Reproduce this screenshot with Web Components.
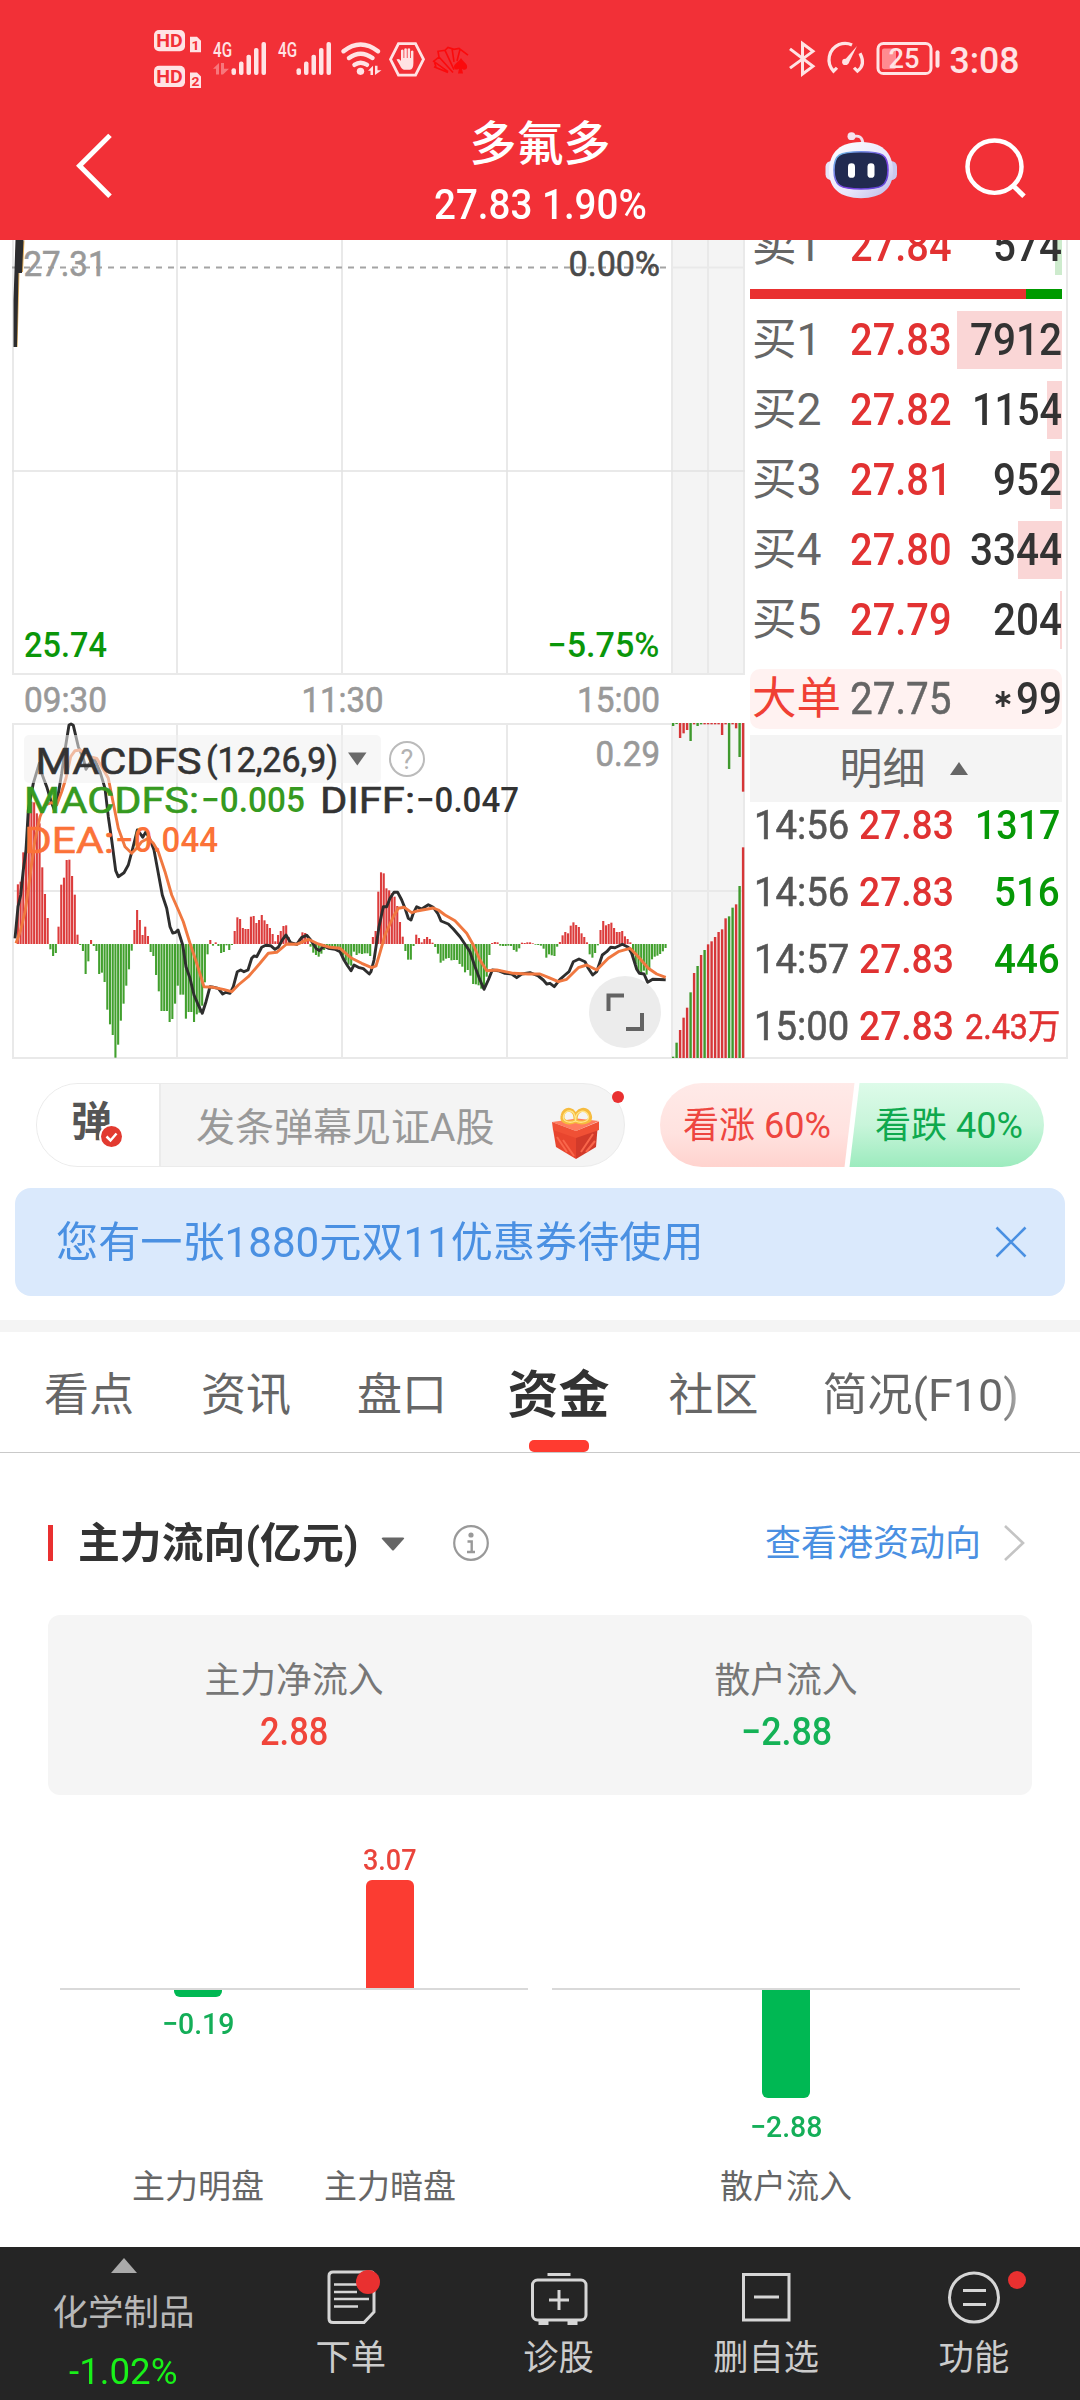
<!DOCTYPE html>
<html lang="zh-CN">
<head>
<meta charset="utf-8">
<title>多氟多 27.83 1.90%</title>
<style>
html, body { margin: 0; padding: 0; background: #fff; }
body { width: 1080px; height: 2400px; overflow: hidden; font-family: Roboto, "Noto Sans CJK SC", sans-serif; color: #333; }
</style>
</head>
<body>
<stock-app></stock-app>
<script>
const define = (tag, html, setup) => {
  const tpl = document.createElement('template');
  tpl.innerHTML = '<style>*{box-sizing:border-box}svg{display:block;overflow:visible}</style>' + html;
  customElements.define(tag, class extends HTMLElement {
    connectedCallback() {
      if (this.shadowRoot) return;
      const root = this.attachShadow({ mode: 'open' });
      root.appendChild(tpl.content.cloneNode(true));
      if (setup) setup(this, root);
    }
  });
};

/* Text squeezed or widened horizontally to a given advance width. */
define('fit-text', `
<style>
:host { display: block; white-space: nowrap; flex: none; }
span { display: inline-block; transform-origin: 0 50%; white-space: pre; }
</style><span><slot></slot></span>`, (el, root) => {
  const w = +el.getAttribute('w'), span = root.querySelector('span');
  el.style.width = w + 'px';
  span.style.transform = `scaleX(${w / span.offsetWidth})`;
});

define('status-bar', `
<style>
:host { display: flex; height: 104px; padding: 0 61px 0 154px; justify-content: space-between; }
</style>
<svg width="320" height="104.500" viewBox="154 0 320 108" preserveAspectRatio="none" fill="#ffe3e4" font-family="Roboto">
  <rect x="154" y="31" width="31" height="22" rx="5"/><rect x="154" y="68" width="31" height="22" rx="5"/>
  <path d="M190 38h7l4 4v12h-11zM190 75h7l4 4v12h-11z"/>
  <g fill="#f23037" font-weight="700" text-anchor="middle">
    <text x="169.500" y="49" font-size="19.500">HD</text><text x="169.500" y="86" font-size="19.500">HD</text>
    <text x="195.500" y="52" font-size="14">1</text><text x="195.500" y="88.500" font-size="14">2</text>
  </g>
  <g font-weight="500" font-size="21"><text x="213" y="58.500" textLength="19" lengthAdjust="spacingAndGlyphs">4G</text><text x="278" y="58.500" textLength="19" lengthAdjust="spacingAndGlyphs">4G</text></g>
  <g opacity=".4"><path d="M213 71l6-6v12h-3v-6zM221 65h3v6h5l-6 6h-2z"/></g>
  <g id="bars"><rect x="231.500" y="70.500" width="4.500" height="7" rx="2"/><rect x="239" y="63.500" width="4.500" height="14" rx="2"/><rect x="246.500" y="56.500" width="4.500" height="21" rx="2"/><rect x="254" y="49.500" width="4.500" height="28" rx="2"/><rect x="261.500" y="43.500" width="4.500" height="34" rx="2"/></g>
  <use href="#bars" x="65"/>
  <g fill="none" stroke="#ffe3e4" stroke-width="4.500" stroke-linecap="round"><path d="M343.500 53q17-14 34.500 0M349 60q11.500-9 23.500 0M354.500 67q6-4.500 12.500 0"/></g>
  <circle cx="360.500" cy="73.700" r="3.700"/><path d="M368 73l5-5v9.500h-2.500v-4.500zM375 68h2.500v4.500h4l-6.500 5z"/>
  <path d="M390.500 61.300L398.500 45h17l8 16.300-8 16.300h-17z" fill="none" stroke="#ffe3e4" stroke-width="2.800"/>
  <path d="M396.500 61.500q2.500-1.500 4.500 1.500V52q1.500-1.500 2.500 0v8h.8v-9.500q1.500-1.500 2.500 0V60h.8v-9.500q1.500-1.500 2.500 0V60h.8v-7q1.500-1.500 2.500 0v12q0 6.500-3.500 7h-6q-2 0-4-4.500z"/>
  <g fill="none" stroke="#fb0a0c" stroke-width="1.600"><path d="M436 69l-2-6 5-4-1-6 7-1 3-3 6 2 5-1 4 3 5 4M439 59l14 16M445 52l9 20M452 50l2 14M460 51l-3 12M434 69l14 6M433 63l15 11"/></g>
  <path d="M461 60c3 5 7 6 6 10-1 3-4 2-5 1l1 5h-5l1-5c-1 1-5 2-5-2 0-3 4-4 7-9z" fill="#fb0a0c"/>
</svg>
<svg width="232" height="104.500" viewBox="787 0 232 108" preserveAspectRatio="none" fill="none" stroke="#ffe3e4" font-family="Roboto">
  <path d="M790 50.500L813 68.500 802.500 76.500V45L813 53 790 70.500" stroke-width="3"/>
  <path d="M852 46.500Q846 43.500 839 46C828 51 826 65 833.500 73.500L837 70M860 55Q866 67 857.500 73.500L854 70" stroke-width="3.200"/>
  <path d="M857 47.500l-8.500 18q-4 3-6-1z" fill="#ffe3e4" stroke="none"/><circle cx="845.300" cy="64" r="3.200" fill="#ffe3e4" stroke="none"/>
  <rect x="878" y="45" width="53" height="31" rx="5.500" stroke-width="3"/>
  <rect x="882" y="50" width="14" height="21.500" rx="2" fill="#ff8b90" stroke="none"/>
  <rect x="935.500" y="52" width="4" height="18" rx="2" fill="#ffe3e4" stroke="none"/>
  <g fill="#ffe3e4" stroke="none"><text x="888.500" y="70.500" font-size="28" font-weight="500" textLength="31" lengthAdjust="spacingAndGlyphs">25</text>
  <text x="949.500" y="75.500" font-size="37.500" font-weight="500" textLength="70" lengthAdjust="spacingAndGlyphs">3:08</text></g>
</svg>`);

define('stock-header', `
<style>
:host { display: block; height: 240px; background: #f23037; color: #fff; overflow: hidden; }
.row { display: flex; height: 136px; justify-content: space-between; }
.side { width: 280px; display: flex; }
.mid { display: flex; flex-direction: column; align-items: center; font-weight: 500; }
.name { font-size: 47px; line-height: 66px; height: 70px; padding-top: 7px; }
.price { font-size: 42px; line-height: 62px; }
.left { padding: 25.700px 0 0 70px; }
.right { justify-content: flex-end; gap: 59px; padding: 22px 50px 0 0; }
</style>
<status-bar></status-bar>
<div class="row">
  <div class="side left"><svg width="50" height="71.600" viewBox="70 134 50 74" preserveAspectRatio="none"><path d="M110 139.500L79.500 171l30.500 31.500" fill="none" stroke="#fff" stroke-width="5"/></svg></div>
  <div class="mid"><div class="name">多氟多</div><fit-text class="price" w="213">27.83 1.90%</fit-text></div>
  <div class="side right">
    <svg width="76" height="77.500" viewBox="823 130 76 80" preserveAspectRatio="none">
      <defs><linearGradient id="sh" x1="0" y1="0" x2="1" y2="1"><stop offset="0" stop-color="#fff"/><stop offset=".6" stop-color="#e8e6fb"/><stop offset="1" stop-color="#b9b7e6"/></linearGradient>
      <linearGradient id="rim" x1="0" y1="0" x2="1" y2="1"><stop offset="0" stop-color="#6ec5e8"/><stop offset=".6" stop-color="#7a3fe0"/><stop offset="1" stop-color="#5b4ad8"/></linearGradient></defs>
      <path d="M852 141.500q10-4 11 7" fill="none" stroke="#f3ddea" stroke-width="3"/><circle cx="851.500" cy="140.500" r="4" fill="#f6e3ef"/>
      <rect x="825.500" y="166" width="12" height="20" rx="6" fill="#e6e3f8"/><rect x="885" y="166" width="12" height="20" rx="6" fill="#c9c8ee"/>
      <path d="M861 146.500c25 0 32 15 32 30 0 18-11 28-32 28s-32-10-32-28c0-15 7-30 32-30z" fill="url(#sh)"/>
      <path d="M861 156.500c22 0 27 3 27 19 0 17-7 19.500-27 19.500s-27-2.500-27-19.500c0-16 5-19 27-19z" fill="#212a50" stroke="url(#rim)" stroke-width="1.600"/>
      <rect x="848" y="168.500" width="7" height="15" rx="3.500" fill="#fff"/><rect x="867.500" y="168.500" width="7" height="15" rx="3.500" fill="#fff"/>
    </svg>
    <svg width="72" height="73.600" viewBox="958 130 72 76" preserveAspectRatio="none" fill="none" stroke="#fff" stroke-width="4.500"><circle cx="994.500" cy="172" r="27"/><path d="M1014 192.500l10 10" stroke-width="5"/></svg>
  </div>
</div>`);

/* Minute chart with the MACD study below and the auction column at the right. */
define('time-chart', `
<style>:host { display: block; width: 745px; height: 823px; overflow: hidden; }</style>
<svg width="745" height="823" viewBox="0 240 745 823" font-family="Roboto">
  <rect x="672" y="240" width="72" height="434" fill="#f4f4f4"/><rect x="672" y="724" width="72" height="334" fill="#f4f4f4"/>
  <g stroke="#e9e9e9" stroke-width="2" fill="none">
    <path d="M13 240V674M177 240V674M342 240V674M507 240V674M672 240V674M708 240V674M744 240V674M12 674H745M672 267.500H744"/>
    <path d="M12 471H745" stroke="#e2e2e2" stroke-width="1.500"/>
    <path d="M13 724V1058M177 724V1058M342 724V1058M507 724V1058M672 724V1058M708 724V1058M744 724V1058M12 724H745M12 891H745M12 1058H745"/>
  </g>
  <path d="M12 267.500H668" stroke="#a4a4a4" stroke-width="1.800" stroke-dasharray="6 6"/>
  <path d="M24.500 240L23 272h-3.500L17.500 347h-2V250z" fill="#e0ac58"/>
  <path d="M15.500 240h8L22 273h-3.500L17 347h-3.500V300z" fill="#2c2c2e"/>
  <g id="hist"></g><g id="auction"></g>
  <g fill="none" stroke-width="2.900" stroke-linejoin="round"><path id="diff" stroke="#2e2e2e"/><path id="dea" stroke="#f07840"/></g>
  <rect x="24" y="735" width="357" height="48" rx="5" fill="#f0f0f0" fill-opacity=".55"/>
  <path d="M348 752.500h18.500l-9.200 13z" fill="#6a6a6a"/>
  <circle cx="407" cy="759" r="17" fill="none" stroke="#bbb" stroke-width="2"/>
  <text x="407" y="768.500" font-size="27" fill="#b2b2b2" text-anchor="middle">?</text>
  <g id="labels"></g>
  <circle cx="625" cy="1012" r="36" fill="#ececec"/>
  <path d="M608.500 1011v-15.500H624M642 1013v16h-16" fill="none" stroke="#636363" stroke-width="4"/>
</svg>`, (el, root) => {
  const hist = [0,179,187,275,292,410,427,425,392,362,230,150,78,-16,-36,-27,52,178,199,252,253,204,148,28,-3,-21,-90,-52,12,-6,-21,-90,-86,-114,-197,-241,-273,-341,-302,-230,-179,-125,-76,-20,42,102,72,27,52,24,-24,-36,-93,-142,-201,-201,-201,-234,-225,-179,-125,-152,-152,-224,-204,-204,-234,-211,-206,-185,-115,-31,12,-5,5,-6,-27,-24,-4,-18,-3,39,80,75,48,45,45,82,84,63,72,87,71,60,48,30,8,27,39,54,56,20,6,4,-4,16,35,33,17,-8,-26,-33,-38,-29,-18,-12,-12,-14,-12,-15,-25,-35,-50,-62,-65,-23,-33,-28,-30,-28,-28,-36,21,39,157,215,212,167,161,152,142,114,66,22,-21,-47,-47,-6,28,18,5,15,21,15,4,-9,-29,-56,-50,-44,-42,-49,-48,-48,-60,-68,-85,-78,-95,-120,-121,-124,-134,-137,-98,-33,3,6,5,-5,-6,-6,-5,-6,-18,-23,-13,4,3,5,5,2,-2,-3,-5,-14,-41,-31,-34,-36,-8,6,26,36,32,55,65,57,51,32,21,5,-31,-41,-27,-4,42,69,56,60,64,48,36,36,39,23,15,5,-40,-60,-85,-85,-80,-92,-74,-46,-38,-35,-30,-22,-12];
  const rect = (x, y, w, h, f) => `<rect x="${x.toFixed(2)}" y="${y.toFixed(2)}" width="${w}" height="${h.toFixed(2)}" fill="${f}"/>`;
  root.getElementById('hist').innerHTML = hist.map((v, i) => {
    const x = (45.5 + 8.13 * i) / 3 - 1.05, h = Math.abs(v) / 3;
    return rect(x, v > 0 ? 944 - h : 944, 2.1, h, v > 0 ? '#dc3c3c' : '#42a02e');
  }).join('');
  const cols = 'ggrrrgrgrgrrrrrrggrgr';
  const low = [1070,1028,990,953,923,877,819,798,765,750,733,724,711,696,688,655,649,623,613,558,442];
  const topCols = 'ggrrrgrggrrrrrrrgrrgr';
  const high = [78,72,114,100,90,123,73,78,73,73,73,73,73,73,105,73,207,73,85,171,275];
  const c = { r: '#d63638', g: '#3f992d' };
  topCols.length && (root.getElementById('auction').innerHTML = low.map((y, i) => {
    const x = 370 + (909 + 10.5 * i) / 3 - 1.1;
    return rect(x, 700 + y / 3, 2.4, (1074 - y) / 3, c[cols[i]]) + rect(x, 723, 2.4, (high[i] - 69) / 3, c[topCols[i]]);
  }).join(''));
  const path = (a, b) => 'M' + a.concat(b.map((v, i) => i % 2 ? v : v + 1110)).map((v, i) => (i % 2 ? 700 + v / 3 : v / 3).toFixed(1)).join(' ');
  root.getElementById('diff').setAttribute('d', path(
    [45,715,54,620,62,585,70,510,78,450,85,330,100,250,118,190,127,225,140,260,152,300,163,330,172,300,185,220,195,150,207,75,213,72,220,76,235,140,250,175,258,208,275,180,285,180,300,215,315,265,325,350,335,420,347,512,355,530,372,518,385,495,397,450,412,390,420,400,428,412,437,397,447,410,462,450,475,520,487,585,500,625,510,680,518,699,527,697,534,690,548,735,558,800,570,835,582,885,595,915,607,940,618,905,630,860,640,862,655,865,668,882,678,877,690,880,700,860,712,815,722,810,732,815,744,810,755,775,762,768,770,770,785,742,797,736,812,737,825,748,835,742,848,718,858,705,872,728,890,733,905,712,920,706,932,720,948,745,958,752,972,738,985,745,1005,748,1020,755,1032,780,1043,798,1053,812,1062,795,1075,802,1090,806,1108,822],
    [3,815,12,780,18,740,27,680,40,620,50,620,60,595,72,577,83,577,95,600,105,625,115,655,123,660,130,640,140,620,155,627,175,614,190,622,203,640,213,663,235,672,250,687,270,710,290,740,300,755,315,800,330,840,342,868,355,840,367,810,385,812,405,820,425,822,440,833,455,822,480,818,505,828,520,840,530,852,540,850,553,860,570,838,585,825,597,815,610,785,627,777,645,785,655,805,668,825,680,815,697,765,710,755,722,742,735,743,757,733,775,742,785,760,800,808,808,820,822,822,833,847,848,838,887,839]));
  root.getElementById('dea').setAttribute('d', path(
    [48,730,62,690,75,635,85,570,95,490,105,420,120,350,135,315,155,308,170,315,185,275,198,235,212,170,225,152,240,150,270,170,290,175,305,200,325,235,340,310,355,385,375,440,395,460,410,445,425,425,445,415,460,430,475,455,495,515,515,585,535,630,550,665,570,730,590,790,612,860,640,862,670,868,695,875,715,855,745,830,780,790,805,760,830,757,860,732,890,733,925,718,955,732,990,742,1020,745,1055,775,1085,790],
    [5,803,18,798,28,765,45,705,70,650,85,625,103,622,125,638,145,632,190,624,205,630,225,645,255,662,290,700,310,735,330,780,350,812,380,810,430,820,475,822,510,822,535,832,565,845,590,838,625,803,650,795,680,810,715,775,745,755,780,745,800,765,835,805,860,822,887,832]));
  const g = '#0a960a', gr = '#999', k = '#333', m = '#369a20', o = '#fb7238';
  const texts = [
    ['27.31', 23.5, 263.800, 83, gr, 400], ['0.00%', 568.5, 263.800, 91.5, '#4a4a4a', 400],
    ['25.74', 24, 644.800, 83, g, 500], ['−5.75%', 547.500, 644.800, 112, g, 500],
    ['09:30', 24, 699.600, 83, gr, 400], ['11:30', 301.500, 699.600, 82, gr, 400], ['15:00', 577, 699.600, 83, gr, 400],
    ['0.29', 595.500, 753.600, 64.5, gr, 400],
    ['MACDFS', 35.500, 761, 166, k, 400], ['(12,26,9)', 206, 760, 132, k, 400],
    ['MACDFS:', 24, 800, 175, m, 400], ['−0.005', 201, 799.800, 104, m, 500],
    ['DIFF:', 320, 800, 95, k, 400], ['−0.047', 416, 799.800, 103, k, 500],
    ['DEA:', 24, 840, 90, o, 400], ['−0.044', 115, 839.800, 103, o, 500]];
  root.getElementById('labels').innerHTML = texts.map(([t, x, y, w, f, b]) => {
    const s = /[A-Z]/.test(t) ? 36.5 : 35;
    return `<text x="${x}" y="${y + s * .357}" font-size="${s}" font-weight="${b}" fill="${f}" ${b === 400 ? `stroke="${f}" stroke-width=".6"` : ''} textLength="${w}" lengthAdjust="spacingAndGlyphs">${t}</text>`;
  }).join('');
});

define('book-row', `
<style>
:host { display: flex; height: 58px; margin-bottom: 12px; font-size: 44.500px; line-height: 58px; flex: none; align-items: center; padding: 0 0 0 2px; position: relative;
  background: linear-gradient(var(--depth, #fad6d6), var(--depth, #fad6d6)) right / var(--w, 0) 100% no-repeat; }
.n { width: 98px; color: #666; flex: none; }
.p { color: #e23232; font-weight: 500; flex: 1; }
.q { color: #333; font-weight: 500; }
</style><div class="n"></div><div class="p"><fit-text w="102"><slot name="p"></slot></fit-text></div><slot name="q" class="q"></slot>`, (el, root) => {
  root.querySelector('.n').textContent = el.getAttribute('label');
  el.style.setProperty('--w', el.getAttribute('bar') + 'px');
});

define('trade-row', `
<style>
:host { display: flex; height: 67px; line-height: 46px; font-size: 41.500px; font-weight: 500; padding: 0 2px 0 4px; flex: none; }
.t { width: 105px; color: #555; font-weight: 400; -webkit-text-stroke: .6px #555; }
.p { flex: 1; color: #e03232; }
.q { color: var(--c, #069806); }
</style><div class="t"><fit-text w="95"><slot name="t"></slot></fit-text></div><div class="p"><fit-text w="95">27.83</fit-text></div><div class="q"><slot></slot></div>`);

define('order-book', `
<style>
:host { display: flex; flex-direction: column; width: 323px; height: 819px; border: 0 solid #e9e9e9; border-width: 0 2px 2px 0; padding: 0 4px 0 5px; overflow: hidden; }
.first { margin-top: -23px; margin-bottom: 14px; --depth: #cdebcd; }
.split { display: flex; height: 10px; margin-bottom: 12px; flex: none; background: #009a00; }
.split i { width: 276px; background: #e93030; }
.big { display: flex; height: 60px; margin: 8px 0 6px; background: #fff2f1; border-radius: 10px; line-height: 59px; font-size: 44px; align-items: center; flex: none; padding: 0 0 0 2px; }
.big b { font-weight: 400; font-size: 44.500px; color: #f04034; width: 98px; }
.big span { flex: 1; color: #666; -webkit-text-stroke: .5px #666; }
.big em { display: flex; align-items: center; gap: 5px; font-style: normal; color: #333; font-weight: 500; }
.more { display: flex; height: 67px; background: #f4f4f4; font-size: 43px; line-height: 76px; color: #666; justify-content: center; align-items: center; gap: 24px; padding-right: 5px; flex: none; }
.last { --c: #e03232; }
</style>
<book-row class="first" label="卖1" bar="7"><span slot="p">27.84</span><fit-text slot="q" w="69">574</fit-text></book-row>
<div class="split"><i></i></div>
<book-row label="买1" bar="105"><span slot="p">27.83</span><fit-text slot="q" w="92">7912</fit-text></book-row>
<book-row label="买2" bar="15"><span slot="p">27.82</span><fit-text slot="q" w="90">1154</fit-text></book-row>
<book-row label="买3" bar="12"><span slot="p">27.81</span><fit-text slot="q" w="69">952</fit-text></book-row>
<book-row label="买4" bar="44"><span slot="p">27.80</span><fit-text slot="q" w="92">3344</fit-text></book-row>
<book-row label="买5" bar="2"><span slot="p">27.79</span><fit-text slot="q" w="69">204</fit-text></book-row>
<div class="big"><b>大单</b><span><fit-text w="102">27.75</fit-text></span><em><svg width="16" height="16" viewBox="0 0 16 16" stroke="#333" stroke-width="3"><path d="M8 0v16M1 4l14 8M15 4L1 12"/></svg><fit-text w="46">99</fit-text></em></div>
<div class="more">明细<svg width="18" height="13"><path d="M0 13L9 0l9 13z" fill="#666"/></svg></div>
<trade-row><span slot="t">14:56</span><fit-text w="85">1317</fit-text></trade-row>
<trade-row><span slot="t">14:56</span><fit-text w="66">516</fit-text></trade-row>
<trade-row><span slot="t">14:57</span><fit-text w="66">446</fit-text></trade-row>
<trade-row class="last"><span slot="t">15:00</span><fit-text w="95" style="font-size:35px;font-weight:400;-webkit-text-stroke:.6px;line-height:49px">2.43万</fit-text></trade-row>`);

define('danmu-bar', `
<style>
:host { display: flex; height: 105px; padding: 20px 36px 0; }
.input { display: flex; width: 589px; height: 84px; border: 1.500px solid #ebebeb; border-radius: 42px; background: #f4f4f4; margin-right: 35px; position: relative; flex: none; }
.tag { width: 124px; border-right: 2px solid #ebebeb; background: #fff; border-radius: 41px 0 0 41px; padding-left: 34px; font-size: 41px; font-weight: 700; color: #555; line-height: 76px; position: relative; }
.tag svg { position: absolute; left: 62px; top: 40px; }
.hint { flex: 1; padding-left: 35px; font-size: 39px; line-height: 88px; color: #999; white-space: nowrap; }
.gift { margin: 22px 22px 0 0; }
.dot { position: absolute; right: 0; top: 7px; width: 12px; height: 12px; border-radius: 6px; background: #e93030; }
.vote { width: 384px; height: 84px; }
</style>
<div class="input">
  <div class="tag">弹<svg width="25" height="25" viewBox="0 0 25 25"><circle cx="12.500" cy="12.500" r="12.500" fill="#fff"/><circle cx="12.500" cy="12.500" r="10.500" fill="#e23a30"/><path d="M7.500 12.500l4 4 6-7" fill="none" stroke="#fff" stroke-width="2.500"/></svg></div>
  <div class="hint">发条弹幕见证A股</div>
  <svg class="gift" width="52" height="54" viewBox="550 1106 52 54">
    <path d="M553 1129l23 8v22l-20-12z" fill="#e8452e"/><path d="M597.500 1129L576 1137v22l20-12z" fill="#d23a2a"/>
    <path d="M552 1122l25-3.500 22 2.500-23 10z" fill="#ff7c5e"/><path d="M552 1122l24 9v7l-23-8zM599 1121.500l-23 9.500v7l23-8z" fill="#f05035"/>
    <path d="M557 1137l10 15M563 1140l11 16M593 1134l-12 18M595 1141l-9 11" stroke="#f9664a" stroke-width="2"/>
    <path d="M575.500 1121c-7 3-14 1-13-5 1-9 14-9 13 5zm0 0c7 3 16 1 14.500-5-1-9-15-9-14.500 5z" fill="none" stroke="#f6bb3e" stroke-width="4"/>
    <path d="M575.500 1121c-7 3-13 0-12-5 2-7 12-8 12 5zm0 0c7 3 14 0 13-5-2-7-13-7-13 5z" fill="none" stroke="#ffe58a" stroke-width="1.300"/>
  </svg>
  <i class="dot"></i>
</div>
<svg class="vote" viewBox="660 1083 384 84" font-family="Roboto, 'Noto Sans CJK SC', sans-serif">
  <defs><linearGradient id="r" x2="0" y2="1"><stop offset="0" stop-color="#ffeae8"/><stop offset=".6" stop-color="#ffe2df"/><stop offset="1" stop-color="#ffd3ce"/></linearGradient>
  <linearGradient id="g" x2="0" y2="1"><stop offset="0" stop-color="#ddfbe9"/><stop offset=".5" stop-color="#c8f5da"/><stop offset="1" stop-color="#9cebbe"/></linearGradient></defs>
  <path d="M702 1083h152.500l-10 84H702a42 42 0 0 1 0-84z" fill="url(#r)"/><path d="M859.500 1083H1002a42 42 0 0 1 0 84H849.500z" fill="url(#g)"/>
  <text x="683" y="1138" font-size="36" fill="#ee4640" textLength="148" lengthAdjust="spacingAndGlyphs">看涨 60%</text>
  <text x="875" y="1138" font-size="36" fill="#0fa94e" textLength="148" lengthAdjust="spacingAndGlyphs">看跌 40%</text>
</svg>`);

define('coupon-banner', `
<style>
:host { display: flex; height: 108px; margin: 20px 15px 24px; border-radius: 16px; background: #dae9fc; color: #4a90e2; font-size: 42px; line-height: 115px; padding: 0 38px 0 41px; justify-content: space-between; align-items: center; }
</style><fit-text w="648">您有一张1880元双11优惠券待使用</fit-text><svg width="32" height="32"><path d="M1.500 1.500l29 29M30.500 1.500l-29 29" stroke="#4a90e2" stroke-width="2.600"/></svg>`);

define('tab-strip', `
<style>
:host { display: flex; border-top: 12px solid #f4f4f4; border-bottom: 1.500px solid #c9c9c9; height: 133px; padding-left: 44px; font-size: 45px; line-height: 127px; color: #666; white-space: nowrap; }
div { width: 90px; flex: none; }
.a { margin-left: 67px; } .b { margin-left: 66px; }
.on { width: 102px; margin: 0 59px 0 60.500px; color: #333; font-size: 51px; font-weight: 700; display: flex; flex-direction: column; align-items: center; height: 120px; justify-content: space-between; }
.on span { height: 106px; } .on i { width: 60px; height: 12px; border-radius: 5px; background: #ff3b30; }
.f { margin-left: 64px; width: 200px; background: linear-gradient(90deg, #666 88%, #aaa 97%); -webkit-background-clip: text; color: transparent; }
</style>
<div>看点</div><div class="a">资讯</div><div class="b">盘口</div><div class="on"><span>资金</span><i></i></div><div>社区</div><div class="f">简况(F10)</div>`);

define('flow-stat', `
<style>
:host { display: flex; flex: 1; flex-direction: column; align-items: center; padding-top: 41px; font-size: 35.800px; line-height: 50px; color: #777; }
.v { font-size: 39px; font-weight: 500; line-height: 52px; color: var(--c); }
</style><div><slot></slot></div><div class="v"><slot name="v"></slot></div>`);

define('flow-bar', `
<style>
:host { display: flex; flex-direction: column; width: 192px; font-size: 33px; color: #666; }
.up, .down { display: flex; flex-direction: column; align-items: center; font-size: 30px; line-height: 38px; font-weight: 500; }
.up { height: 193px; justify-content: flex-end; color: #ea453c; }
.down { height: 174px; padding-top: 2px; color: #14ae58; }
i { width: 48px; display: block; }
.up i { background: #fb3c32; border-radius: 6px 6px 0 0; margin-top: 1px; }
.down i { background: #00b853; border-radius: 0 0 6px 6px; margin-bottom: var(--gap, 10px); }
.name { line-height: 50px; text-align: center; }
</style><div class="up"></div><div class="down"></div><div class="name"><slot></slot></div>`, (el, root) => {
  const v = el.getAttribute('value'), neg = v[0] === '−';
  const w = el.getAttribute('w');
  const text = `<fit-text w="${w}">${v}</fit-text>`, bar = `<i style="height:${el.getAttribute('len')}px"></i>`;
  root.querySelector(neg ? '.down' : '.up').innerHTML = neg ? bar + text : text + bar;
});

define('fund-flow', `
<style>
:host { display: block; padding: 0 48px; height: 794px; }
.title { display: flex; align-items: center; height: 162px; padding-top: 18px; }
.mark { width: 5px; height: 36px; background: #e93030; margin-right: 25px; }
h2 { margin: 2px 0 0; font-size: 42px; font-weight: 700; line-height: 60px; color: #333; }
.tri { margin: 1px 47px 0 23px; }
.link { margin: 2px 22px 0 auto; font-size: 36px; color: #4a90e2; line-height: 50px; }
.arrow { margin-right: 7px; }
.card { display: flex; height: 180px; border-radius: 12px; background: #f5f5f5; }
.plot { display: flex; justify-content: space-between; padding: 0 12px; }
.group { display: flex; justify-content: center; width: 468px; background: linear-gradient(#d9d9d9, #d9d9d9) 0 193px / 100% 2px no-repeat; }
</style>
<div class="title"><div class="mark"></div><h2><fit-text w="280">主力流向(亿元)</fit-text></h2>
  <svg class="tri" width="24" height="14"><path d="M2 .5h20q2 0 .8 1.500L13 13q-1 1-2 0L1 2Q0 .5 2 .5z" fill="#666"/></svg>
  <svg width="38" height="38" viewBox="-19 -19 38 38"><circle r="16.800" fill="none" stroke="#999" stroke-width="2.200"/><circle cy="-8" r="2.600" fill="#999"/><path d="M-3.500-1.500H.7V8.500M-4 9h8" fill="none" stroke="#999" stroke-width="2.400"/></svg>
  <div class="link">查看港资动向</div>
  <svg class="arrow" width="22" height="36"><path d="M2 1l18 17L2 35" fill="none" stroke="#c4c4c4" stroke-width="2.600"/></svg>
</div>
<div class="card"><flow-stat style="--c:#f0453a">主力净流入<fit-text slot="v" w="68">2.88</fit-text></flow-stat><flow-stat style="--c:#14b256">散户流入<fit-text slot="v" w="91">−2.88</fit-text></flow-stat></div>
<div class="plot">
  <div class="group"><flow-bar value="−0.19" len="7" w="72" style="--gap:8px">主力明盘</flow-bar><flow-bar value="3.07" len="108" w="54">主力暗盘</flow-bar></div>
  <div class="group"><flow-bar value="−2.88" len="108" w="72">散户流入</flow-bar></div>
</div>`);

define('nav-item', `
<style>
:host { display: flex; flex-direction: column; align-items: center; width: 207.700px; padding-top: 20px; font-size: 35.300px; line-height: 50px; color: #ccc; }
.i { height: 66px; }
</style><div class="i"><slot name="i"></slot></div><div><slot></slot></div>`);

define('bottom-nav', `
<style>
:host { display: flex; height: 153px; background: #252525; }
.sector { display: flex; flex-direction: column; align-items: center; width: 247px; font-size: 35.500px; color: #b8b8b8; padding-top: 11px; }
.sector div { line-height: 52px; margin-top: 14px; }
.pct { color: #19f019; font-size: 36px; line-height: 46px; margin-top: 10px; }
g { fill: none; stroke: #d6d6d6; stroke-width: 3; }
</style>
<div class="sector"><svg width="26" height="15"><path d="M0 15L13 0l13 15z" fill="#aaa"/></svg><div>化学制品</div><fit-text class="pct" w="109">-1.02%</fit-text></div>
<nav-item><svg slot="i" width="64" height="64" viewBox="320 2267 64 64"><g><path d="M334 2272h38q3 0 3 4v36l-10 10.500h-31q-4 0-4-4V2276q0-4 4-4z"/><path d="M335 2284.500h24M335 2292h23M335 2299h35M335 2306.500h24" stroke-width="2.600"/></g><circle cx="369" cy="2282" r="12" fill="#e93030"/></svg>下单</nav-item>
<nav-item><svg slot="i" width="64" height="64" viewBox="527.500 2267 64 64"><g><rect x="533" y="2280" width="53.500" height="40" rx="5"/><path d="M548 2274.500h23M559.500 2290v20M549.500 2300h20"/><path d="M539 2322.500h10M568 2322.500h10" stroke-width="5"/></g></svg>诊股</nav-item>
<nav-item><svg slot="i" width="64" height="64" viewBox="735 2267 64 64"><g><path d="M744.500 2274.500h45.500v45.500h-45.500zM755 2297h25"/></g></svg>删自选</nav-item>
<nav-item><svg slot="i" width="100" height="64" viewBox="925 2267 100 64"><g><circle cx="975" cy="2297.500" r="24.500"/><path d="M964 2290.500h23M964 2304.500h23"/></g><circle cx="1018" cy="2280" r="9" fill="#e93030"/></svg>功能</nav-item>`);

define('stock-app', `
<style>
:host { display: flex; flex-direction: column; width: 1080px; height: 2400px; background: #fff; overflow: hidden; }
.quote { display: flex; height: 823px; }
stock-header, danmu-bar, coupon-banner, tab-strip, fund-flow, bottom-nav, .quote { flex: none; }
</style>
<stock-header></stock-header>
<div class="quote"><time-chart></time-chart><order-book></order-book></div>
<danmu-bar></danmu-bar><coupon-banner></coupon-banner><tab-strip></tab-strip><fund-flow></fund-flow><bottom-nav></bottom-nav>`);
</script>
</body>
</html>
